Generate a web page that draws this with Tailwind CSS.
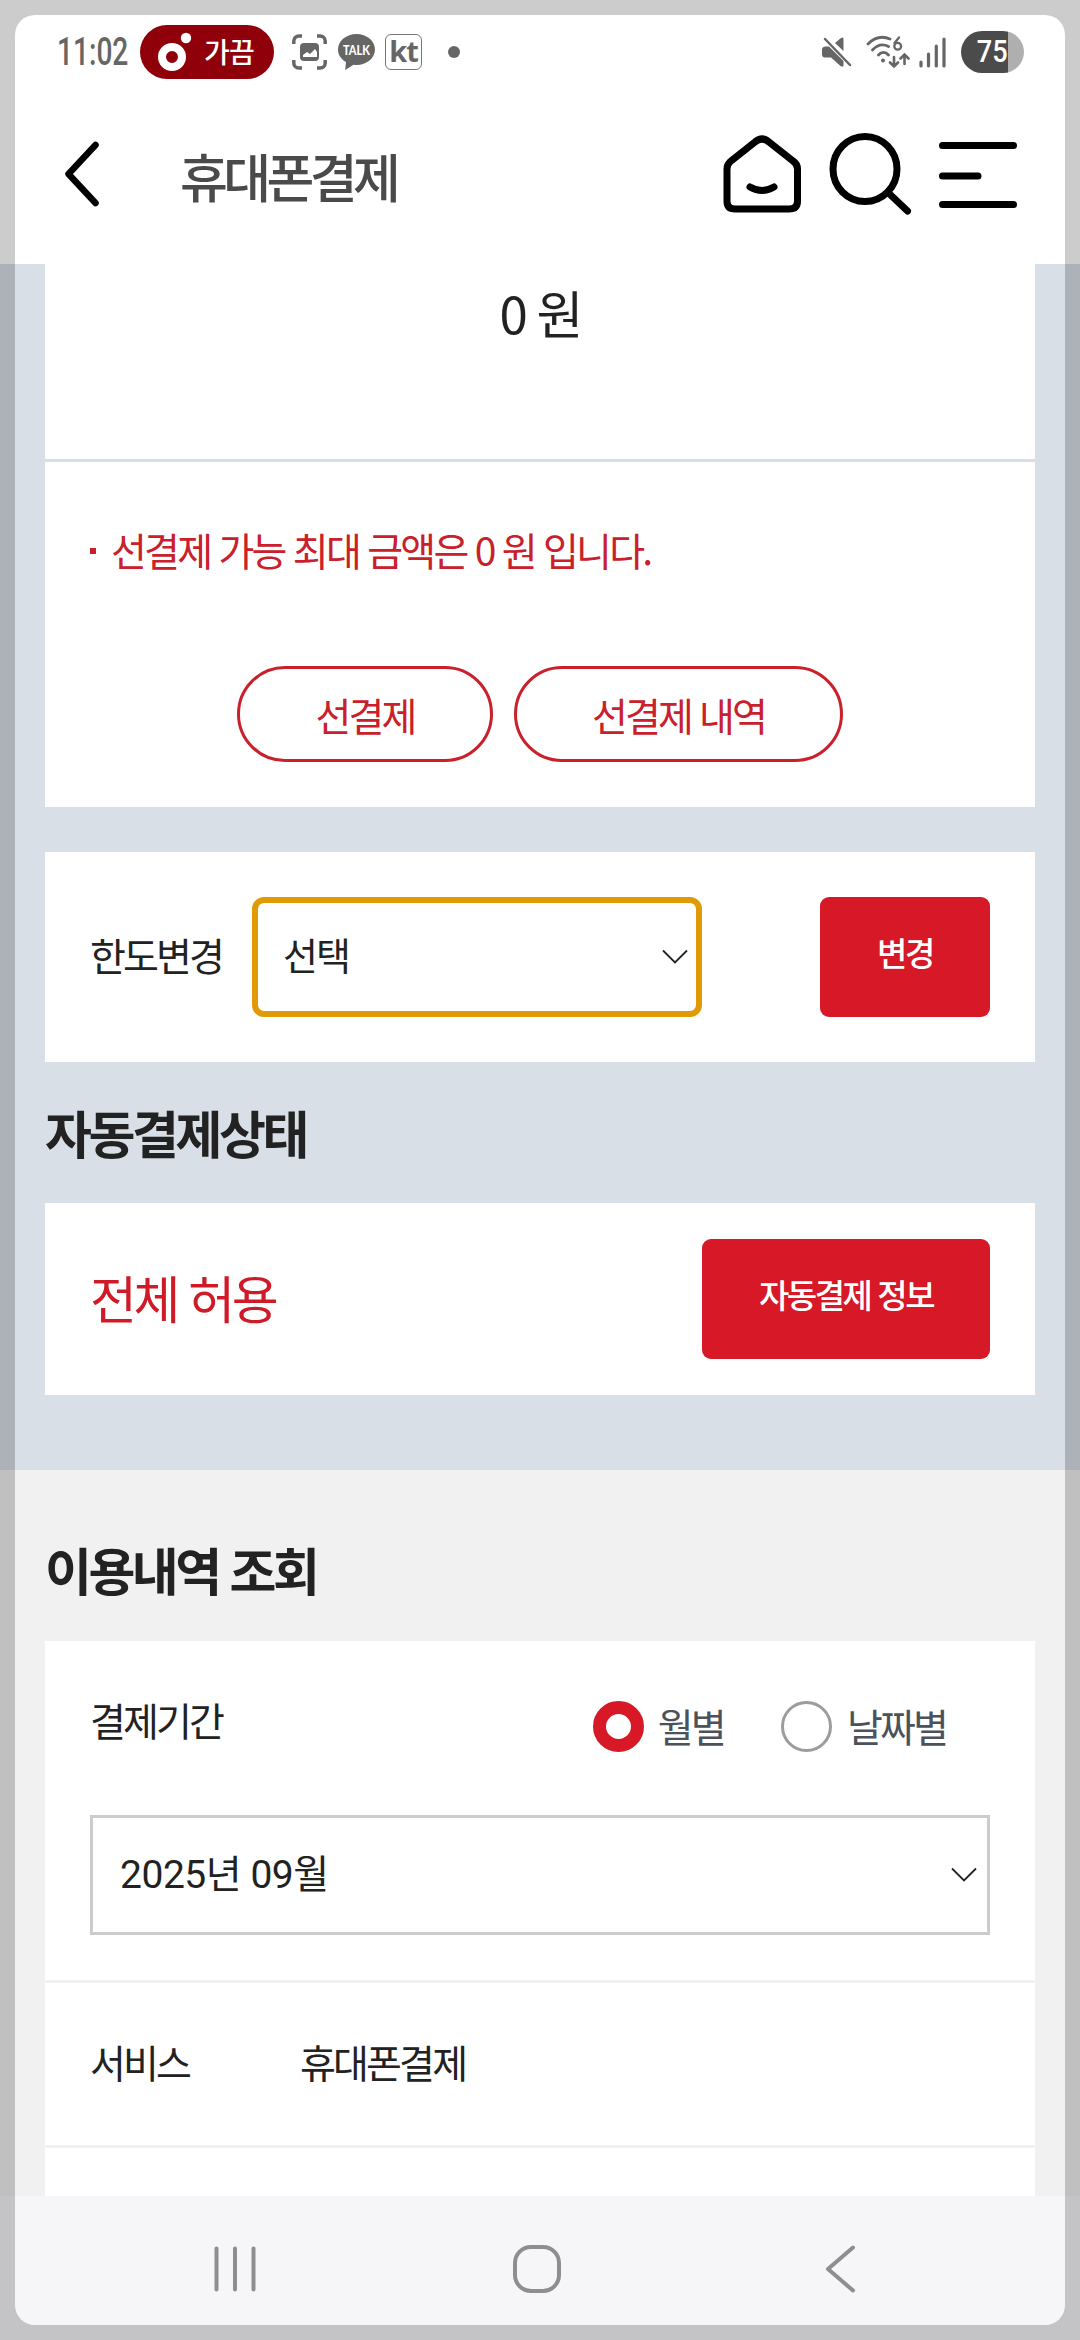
<!DOCTYPE html>
<html lang="ko">
<head>
  <meta charset="UTF-8" />
  <meta name="viewport" content="width=device-width, initial-scale=1" />
  <title>휴대폰결제</title>
  <script src="https://cdn.jsdelivr.net/npm/@tailwindcss/browser@4"></script>
</head>
<body class="relative w-[1080px] h-[2340px] overflow-hidden flex flex-col bg-white text-[#222] text-[39px] leading-none tracking-[-0.073em] font-['Noto_Sans_CJK_KR','Noto_Sans',sans-serif]">

  <!-- Status bar -->
  <div class="h-[104px] shrink-0 flex items-center justify-between pl-[57px] pr-[56px] text-[#666]">
    <div class="flex items-center">
      <div class="w-[83px] h-[40px] leading-[33px] whitespace-nowrap"><span class="inline-block origin-left scale-x-[0.74] text-[38px] font-medium tracking-[0] font-['Roboto',sans-serif]">11:02</span></div>
      <div class="w-[134px] h-[54px] rounded-full bg-[#8f000a] text-white flex items-center">
        <svg class="w-[64px] h-[54px]" viewBox="140 25 64 54" fill="none">
          <circle cx="172" cy="57" r="10" stroke="#fff" stroke-width="8" />
          <circle cx="186" cy="38" r="5.2" fill="#fff" />
        </svg>
        <span class="text-[28px] font-medium tracking-[-0.03em] pb-[3px]">가끔</span>
      </div>
      <svg class="ml-[18px] w-[35px] h-[36px]" viewBox="0 0 35 36" fill="none" stroke="#666" stroke-width="3.5">
        <path d="M1.8 10V7a5 5 0 0 1 5-5H10M25 2h3.200a5 5 0 0 1 5 5v3M33.200 26v3a5 5 0 0 1-5 5H25M10 34H6.800a5 5 0 0 1-5-5v-3" />
        <rect x="8" y="9" width="19" height="18" rx="4" fill="#666" stroke="none" />
        <path d="M11 21l4-3 3 2 5-5 2 3v5H11z" fill="#fff" stroke="none" />
      </svg>
      <svg class="ml-[11px] w-[37px] h-[36px]" viewBox="0 0 37 36">
        <path d="M18.500 0C8.300 0 0 7 0 15.500c0 5.500 3.200 9.800 8 12.500l-.8 8 8.300-5.300c1 .2 2 .3 3 .3C28.700 31 37 24 37 15.500S28.700 0 18.500 0z" fill="#666" />
        <text x="18.500" y="20.500" text-anchor="middle" textLength="27" lengthAdjust="spacingAndGlyphs" font-family="Lato" font-weight="900" font-size="13" letter-spacing="0" fill="#fff">TALK</text>
      </svg>
      <div class="ml-[10px] w-[37px] h-[36px] rounded-[6px] border border-[#777] flex items-center justify-center pb-[3px] text-[29px] font-bold tracking-[-1px] font-['Open_Sans',sans-serif]">kt</div>
      <div class="ml-[26px] size-[12px] rounded-full bg-[#666]"></div>
    </div>
    <div class="flex items-center">
      <svg class="w-[30px] h-[30px]" viewBox="0 0 30 30">
        <path d="M0 12.500Q0 10 3 9.500h4L21.500 24v4q0 3-3 1L9 20.500H3q-3 0-3-3zM13 6l6-5q2.500-1.500 2.500 1v12z" fill="#666" />
        <path d="M3 2l25 26" stroke="#666" stroke-width="2.500" stroke-linecap="round" />
      </svg>
      <svg class="ml-[14px] w-[44px] h-[34px]" viewBox="866 36 44 34" fill="none" stroke="#666" stroke-width="2.800" stroke-linecap="round">
        <path d="M868 45c7-7 15-8 22-5M872.500 51c5-5.500 11-6 16-3.500M878.500 56c3-3.500 7-3.500 10 0" />
        <circle cx="883" cy="61.500" r="2" fill="#666" stroke="none" />
        <path d="M899 38.500l-4.500 5.500" stroke-width="2.300" />
        <circle cx="897.700" cy="47.300" r="3.400" stroke-width="2.300" />
        <path d="M894 58v9m-4-3.500l4 4 4-4M904.500 65v-9m-4 3.500l4-4 4 4" stroke-width="2.600" />
      </svg>
      <svg class="ml-[9px] w-[28px] h-[31px]" viewBox="919 38 28 31" stroke="#666" stroke-width="3.200" stroke-linecap="round">
        <path d="M921 63v4M928.500 55v12M936.300 47v20M944 40v27" />
      </svg>
      <div class="ml-[14px] w-[63px] h-[42px] rounded-full bg-linear-to-r from-[#4b4b4b] from-[75%] to-[#afafaf] to-[75%] text-white text-center"><span class="inline-block align-top scale-x-[0.85] text-[32px] leading-[41px] font-medium tracking-[0] font-['Roboto',sans-serif]">75</span></div>
    </div>
  </div>

  <!-- App header -->
  <header class="h-[160px] shrink-0 flex items-center pl-[64px] pr-[62px] pb-[21px]">
    <svg class="w-[36px] h-[66px]" viewBox="64 141 36 66" fill="none" stroke="#000" stroke-width="6.500" stroke-linecap="round" stroke-linejoin="round">
      <path d="M95.500 145L68.500 174l27 29" />
    </svg>
    <h1 class="ml-[80px] pt-[5px] text-[52px] tracking-[-4.600px] font-medium text-[#4a4a4a]">휴대폰결제</h1>
    <svg class="ml-auto w-[296px] h-[84px]" viewBox="722 132 296 84" fill="none" stroke="#000" stroke-width="7" stroke-linecap="round" stroke-linejoin="round">
      <path d="M727 169Q727 164 731 161L755 142Q762 136 769 142L793 161Q797.500 164 797.500 169V201Q797.500 209 789 209H735Q727 209 727 201Z" />
      <path d="M750 187Q762 194 774 187" />
      <ellipse cx="865" cy="169" rx="32" ry="32.500" />
      <path d="M888 192.500L907.500 211M942.500 145.500H1013.500M942.500 176H978M942.500 204.500H1013.500" />
    </svg>
  </header>

  <main class="h-[1932px] shrink-0 overflow-hidden bg-[#f1f1f1]">
    <section class="h-[1206px] bg-[#d8dfe6] px-[45px]">
      <!-- Prepayment -->
      <div class="h-[543px] bg-white text-[#c9202b]">
        <div class="h-[198px] border-b-3 border-[#d8dfe4] pt-[23px] text-center text-[51px] text-[#222]">0 원</div>
        <div class="flex items-center h-[178px] pl-[45px]">
          <span class="size-[6px] bg-[#c9202b] mr-[15px]"></span>
          <p class="pb-[3px] tracking-[-0.071em]">선결제 가능 최대 금액은 0 원 입니다.</p>
        </div>
        <div class="mt-[26px] flex justify-center gap-[21px]">
          <button class="w-[256px] h-[96px] rounded-full border-3 border-[#c9202b] tracking-[-0.073em]">선결제</button>
          <button class="w-[329px] h-[96px] rounded-full border-3 border-[#c9202b] tracking-[-0.073em]">선결제 내역</button>
        </div>
      </div>

      <!-- Limit change -->
      <div class="mt-[45px] h-[210px] bg-white px-[45px] flex items-center">
        <span class="w-[162px] pb-[6px]">한도변경</span>
        <div class="w-[450px] h-[120px] rounded-[12px] border-6 border-[#e19a05] pl-[25px] pr-[8px] flex items-center justify-between tracking-[0]">
          <span class="pb-[6px] text-[38px] tracking-[-0.05em]">선택</span>
          <svg class="w-[26px] h-[16px]" viewBox="0 0 26 16" fill="none" stroke="#222" stroke-width="1.800"><path d="M1 1.500l12 12 12-12" /></svg>
        </div>
        <button class="ml-auto w-[170px] h-[120px] rounded-[9px] bg-[#d71826] text-white text-[33px] font-medium tracking-[-0.075em] pb-[10px]">변경</button>
      </div>

      <h2 class="h-[141px] pt-[45px] text-[51px] font-bold tracking-[-3.400px]">자동결제상태</h2>
      <div class="h-[192px] bg-white px-[45px] flex items-center justify-between">
        <span class="text-[51px] text-[#cf1b28] pb-[4px] tracking-[-3.300px]">전체 허용</span>
        <button class="w-[288px] h-[120px] rounded-[9px] bg-[#d71826] text-white text-[33px] font-medium tracking-[-0.075em] pb-[10px]">자동결제 정보</button>
      </div>
    </section>

    <!-- Usage history -->
    <section class="px-[45px]">
      <h2 class="h-[171px] pt-[74px] text-[51px] font-bold tracking-[-3.500px]">이용내역 조회</h2>
      <div class="bg-white">
        <div class="h-[342px] border-b-3 border-[#f1f1f1] px-[45px]">
          <div class="h-[174px] pt-[60px] flex">
            <span class="-mt-px">결제기간</span>
            <div class="ml-auto pr-[44px] h-[51px] flex items-center text-[#4b525c]">
              <span class="size-[51px] rounded-full border-13 border-[#d71826]"></span>
              <span class="ml-[14px] pb-[2px]">월별</span>
              <span class="ml-[57px] size-[51px] rounded-full border-3 border-[#9c9c9c]"></span>
              <span class="ml-[15px] pb-[2px]">날짜별</span>
            </div>
          </div>
          <div class="h-[120px] border-3 border-[#ccc] pl-[27px] pr-[10px] flex items-center justify-between tracking-[-0.012em] font-['Roboto','Noto_Sans_CJK_KR',sans-serif]">
            <span>2025년 09월</span>
            <svg class="w-[26px] h-[16px]" viewBox="0 0 26 16" fill="none" stroke="#222" stroke-width="1.800"><path d="M1 1.500l12 12 12-12" /></svg>
          </div>
        </div>
        <div class="h-[165px] border-b-3 border-[#f1f1f1] px-[45px] pb-[5px] flex items-center">
          <span class="w-[210px]">서비스</span>
          <span>휴대폰결제</span>
        </div>
        <div class="h-[48px]"></div>
      </div>
    </section>
  </main>

  <!-- System navigation -->
  <nav class="h-[144px] shrink-0 bg-[#f6f6f8] flex items-start pt-[49px] pl-[213px]">
    <svg class="w-[44px] h-[48px]" viewBox="0 0 44 48" stroke="#8e8e8e" stroke-width="4" stroke-linecap="round"><path d="M3.500 3.500v41M22 3.500v41M40.500 3.500v41" /></svg>
    <svg class="ml-[256px] w-[48px] h-[48px]" viewBox="0 0 48 48" fill="none" stroke="#8e8e8e" stroke-width="4"><rect x="2" y="2" width="44" height="44" rx="16" /></svg>
    <svg class="ml-[264px] w-[31px] h-[48px]" viewBox="0 0 31 48" fill="none" stroke="#8e8e8e" stroke-width="4" stroke-linecap="round" stroke-linejoin="round"><path d="M28 2.500L3 24l25 21.500" /></svg>
  </nav>

  <!-- Dimmed screen edge -->
  <div class="absolute inset-[15px] rounded-[20px] shadow-[0_0_0_40px_rgba(0,0,0,0.2)] pointer-events-none"></div>
</body>
</html>
